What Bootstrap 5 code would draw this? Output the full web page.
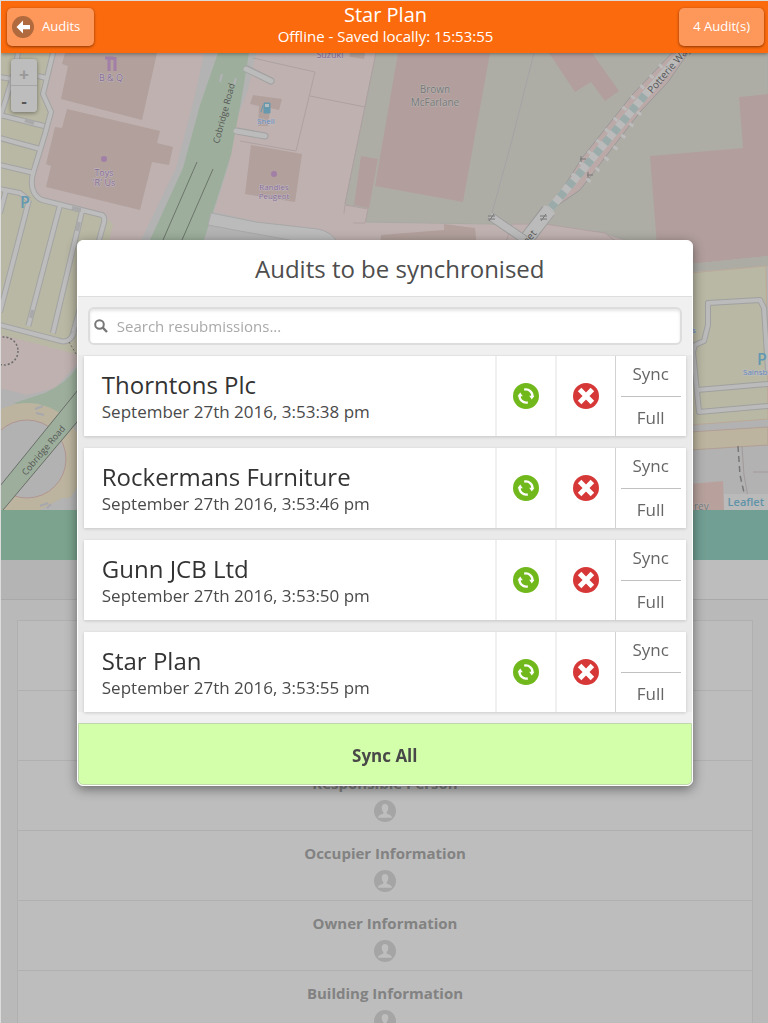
<!DOCTYPE html>
<html lang="en">
<head>
<meta charset="utf-8">
<meta name="viewport" content="width=device-width, initial-scale=1">
<title>Star Plan</title>
<link href="https://cdn.jsdelivr.net/npm/bootstrap@5.3.0/dist/css/bootstrap.min.css" rel="stylesheet">
<style>
body{font-family:"Open Sans","Noto Sans",sans-serif;background:#b9b9b9;border-top:1px solid #dcdcdc;border-left:1px solid #dcdcdc;color:#444}
.topbar{height:52px;background:#fb6b0e;color:#fff;box-shadow:0 1px 4px rgba(0,0,0,.4);padding:0 4px 0 6px;z-index:2}
.topbar h1{font-size:20px;line-height:22px;font-weight:500}
.topbar p{font-size:15px;line-height:20px;font-weight:500;padding-bottom:4px}
.topbtn{height:38px;background:#fd975a;color:#fff;font-size:13px;font-weight:500;border:0;border-radius:5px;box-shadow:0 1px 3px rgba(90,30,0,.7);padding:0 14px}
.topbtn:hover{background:#fda46e;color:#fff}
.topbtn-back{padding:0 14px 0 5px}
.topside{flex:1 1 0}
.mapview svg{display:block;width:100%;height:auto}
.zoomctl{position:absolute;left:10px;top:6px;width:26px;border-radius:4px;overflow:hidden;box-shadow:0 1px 4px rgba(0,0,0,.4)}
.zoomctl button{height:26px;border:0;background:#bdbdbd;color:#555;font:bold 17px/24px "Liberation Sans",sans-serif;padding:4px 0 0}
.zoomctl button+button{border-top:1px solid #a6a6a6;height:27px}
.zoomctl button:disabled{color:#999}
.attrib{position:absolute;right:0;bottom:0;font-size:11px;line-height:16px;padding:0 4px;background:#bababa}
.attrib a{color:#5f93a8;font-weight:600;text-decoration:none}
.tabs-a{height:50px;background:linear-gradient(90deg,#7ba38d 50%,#729f93 50%)}
.tabs-b{height:40px;background:linear-gradient(90deg,#b4b4b4 50%,#bdbdbd 50%);border-bottom:1px solid #a9a9a9}
.sections{margin:20px 15px 0 16px;background:#bdbdbd;border:1px solid #b0b0b0;border-bottom:0}
.sections li{height:70px;border-bottom:1px solid #b0b0b0;padding-top:12px;font-size:15px;line-height:20px;font-weight:700;color:#828282;text-align:center}
.sections svg{display:block;margin:7px auto 0}
.overlay{position:fixed;inset:0;z-index:5;padding:3px 9.8% 0 10%}
.dialog{width:100%;background:#f0f0f0;border:1px solid #fff;border-radius:6px;overflow:hidden;box-shadow:0 3px 12px rgba(0,0,0,.45)}
.dialog h2{background:#fff;border-bottom:1px solid #dedede;font-size:24px;line-height:55px;color:#4d4d4d;padding-left:30px}
.searchbox{margin:10px;height:38px;background:#fff;border:2px solid #ddd;border-radius:6px;box-shadow:inset 0 2px 3px rgba(0,0,0,.1);padding:0 4px}
.searchbox input{border:0;background:none;outline:0;font-size:15px;line-height:20px;color:#444;padding:0 0 0 9px}
.searchbox input::placeholder{color:#a9a9a9;opacity:1}
.queue{background:#eaeaea;padding:1px 6px 0;gap:12px}
.audit{height:80px;background:#fff;box-shadow:0 1px 3px rgba(0,0,0,.16)}
.audit h3{font-size:24px;line-height:28px;color:#333}
.audit p{font-size:17px;line-height:26px;color:#4a4a4a}
.audit .info{padding:15px 0 0 18px}
.iconcell{width:60px;border:0;border-left:2px solid #f0f0f0;background:none;padding:0}
.modes{width:71px;border-left:1px solid #d2d2d2;padding:0 5px}
.modes button{border:0;background:none;font-size:17px;line-height:24px;color:#666;padding:0 0 4px;flex:1 1 0}
.modes button+button{border-top:1px solid #c0c0c0;padding:3px 0 0}
.syncall{margin-top:11px;height:62px;background:#d3ffab;border:1px solid #c0d8ae;border-radius:0 0 5px 5px;font-size:17px;font-weight:700;color:#484848;padding-top:4px}
</style>
</head>
<body class="vh-100 overflow-hidden">
<svg width="0" height="0" class="position-absolute" aria-hidden="true">
<symbol id="ic-sync" viewBox="0 0 26 26"><circle cx="13" cy="13" r="13" fill="#70b81b"/><path d="M6.600 12A6.600 6.600 0 0 0 14.800 19.300M19.400 14A6.600 6.600 0 0 0 11.200 6.700" fill="none" stroke="#fff" stroke-width="2.300"/><path d="M4.600 13.200 7.200 9.600 9.800 13.200ZM21.400 12.800 18.800 16.400 16.200 12.800Z" fill="#fff"/></symbol>
<symbol id="ic-del" viewBox="0 0 26 26"><circle cx="13" cy="13" r="13" fill="#d63838"/><path d="M6.600 6.600 19.400 19.400M19.400 6.600 6.600 19.400" stroke="#fff" stroke-width="5"/></symbol>
<symbol id="ic-user" viewBox="0 0 22 22"><circle cx="11" cy="11" r="11" fill="#a5a5a5"/><path d="M11 4c-2.200 0-3.500 1.700-3.300 4 .1 1.900.8 3.200 1.600 4v1.700C7 14.600 4.500 14.800 4 17.800h14c-.5-3-3-3.200-5.300-4.100V12c.8-.8 1.500-2.100 1.600-4C14.500 5.700 13.200 4 11 4Z" fill="#bebebe"/></symbol>
</svg>
<header class="topbar position-relative d-flex align-items-center">
  <div class="topside"><button class="btn topbtn topbtn-back d-inline-flex align-items-center" type="button"><svg width="22" height="22" viewBox="0 0 22 22" class="me-2"><circle cx="11" cy="11" r="11" fill="#b06a3e"/><path d="M4.500 11 11 4.500V9h7v4.200h-7v4.300Z" fill="#fff"/></svg>Audits</button></div>
  <div class="text-center"><h1 class="m-0">Star Plan</h1><p class="m-0">Offline - Saved locally: 15:53:55</p></div>
  <div class="topside text-end"><button class="btn topbtn" type="button">4 Audit(s)</button></div>
</header>
<main>
<section class="mapview position-relative" aria-label="Map">
<svg viewBox="1 53 767 457" font-family="'Open Sans','Noto Sans',sans-serif">
<rect x="0" y="53" width="768" height="457" fill="#bfb1b0"/>
<!-- brownfield land -->
<path d="M376 53H768V260H690L600 232 490 224 366 222 368 208 345 204Z" fill="#aeada5" stroke="#a9a9a4"/>
<path d="M345 205 368 209 365 223 344 223 343 260H500L512 224 545 224 605 233 640 260H690V320H330Z" fill="#bfb1b0" stroke="#b0a2a1"/>
<!-- car parks, left -->
<path d="M0 53H50L42 96 50 112 44 135 33 170 31 188 40 200 104 216 113 224 95 300 88 360 0 332Z" fill="#b9b8a4"/>
<g fill="none" stroke="#a3a3a3" stroke-width="6"><path d="M53 53 43 94 51 112 45 134 34 170C29 185 33 196 42 200L102 215Q106 218 103 226L72 337Q68 344 58 340L0 325M18 53 15 70 0 118M0 77 12 79M38 76 46 78M0 115 44 126M0 138 40 149M0 165 34 173M0 189 20 193 29 200M6 190 0 213M29 200 0 312M60 205 27 331M82 211 52 337"/></g>
<g fill="none" stroke="#bdbdbd" stroke-width="4"><path d="M53 53 43 94 51 112 45 134 34 170C29 185 33 196 42 200L102 215Q106 218 103 226L72 337Q68 344 58 340L0 325M18 53 15 70 0 118M0 77 12 79M38 76 46 78M0 115 44 126M0 138 40 149M0 165 34 173M0 189 20 193 29 200M6 190 0 213M29 200 0 312M60 205 27 331M82 211 52 337"/></g>
<path d="M25 120 34 123M72 208 81 210M79 222 77 231M33 310 31 318M51 338 60 340" stroke="#a9a9a9" stroke-width="4"/>
<!-- retail buildings -->
<g fill="#b1a09b">
<path d="M65 53H157L142 120 61 99 68 66 62 64Z"/>
<path d="M67 109 160 131 157 143 173 147 169 165 152 162 140 210 46 187 51 166 46 164 55 127 62 128Z"/>
<path d="M345 53H365L364 59 345 56Z"/><path d="M381 235 444 230V224L466 227 475 228 478 260H379Z"/>
</g>
<g fill="#b29f9d"><path d="M398 53H490L463 202 375 186Z"/><path d="M361 156 378 159 369 208 354 205Z"/><path d="M549 53H592L619 91 605 101 591 82 575 92Z"/><path d="M768 94 739 97 743 148 650 156 658 260H768Z"/></g>
<!-- Cobridge Road -->
<path d="M204 53 195 95 176 168 141 240H250L225 150 262 53Z" fill="#b3b3b3"/>
<path d="M240 53H250L212 210 228 212 256 218 318 228 350 250H208L230 150Z" fill="#b3b3b3"/>
<path d="M249 53 242 96 231 155 204 240H150L183 168 200 105 218 53Z" fill="#9daf9c"/>
<path d="M197 162 163 240M213 169 182 240" stroke="#6b756b" fill="none"/>
<path d="M222 74 220 82M236 78 234 85" stroke="#b1b1b6" stroke-width="2"/>
<path d="M256 53 237 140 214 212 340 240H370L330 200 350 53Z" fill="#bfb1b0"/>
<g fill="none" stroke-linecap="round"><path d="M247 69 271 81M237 131 265 136" stroke="#a1a1a1" stroke-width="7"/><path d="M246 69 271 81M236 131 265 136" stroke="#bbb" stroke-width="5"/></g>
<path d="M211 213 256 222 318 229Q332 232 337 242H300L240 231 208 225Z" fill="#bbb" stroke="#a8a8a8"/>
<g fill="#b1a09b"><path d="M253 95 282 99 279 110 270 108 268 126 258 126 259 106 250 104Z"/><path d="M251 145 302 154 295 202 245 194Z"/></g>
<path d="M253 58 315 72 296 151 240 141M310 96 365 107M376 53 345 204" fill="none" stroke="#ada1a1"/>
<!-- Potterie Way -->
<path d="M672 53 632 95 582 158 548 212 580 190 640 112 668 82 688 53Z" fill="#bba9a8" stroke="#999"/>
<path d="M662 65 634 96 584 160 560 196" stroke="#bcbcbc" stroke-width="5" stroke-dasharray="3 11" fill="none"/>
<path d="M640 112 614 150 582 188" stroke="#bcbcbc" stroke-width="5" stroke-dasharray="3 11" fill="none"/>
<path d="M682 53 645 95 550 209" stroke="#bbb" stroke-width="8" fill="none"/>
<path d="M645 95 550 209" stroke="#9aabaa" stroke-width="8" stroke-dasharray="7 7" fill="none"/>
<path d="M548 211 520 248" stroke="#9b9b9b" stroke-width="15"/><path d="M550 209 518 250" stroke="#bbb" stroke-width="13"/>
<path d="M490 216 525 240" stroke="#9e9e9e" stroke-width="9"/><path d="M490 216 525 240" stroke="#bbb" stroke-width="7"/>
<path d="M488 216H495M488 219H495M489 221 494 214M540 216H547M540 219H547M541 221 546 214M580 159H586M581 156V162M587 175H593M588 172V178" stroke="#777" fill="none"/>
<path d="M534 53 512 140 492 213" stroke="#a5a3a5" fill="none"/>
<!-- roundabout, lower left -->
<path d="M0 325 77 345V372Q60 395 27 395L0 388Z" fill="#bfb1b0"/>
<path d="M0 335 10 337 80 355 80 341 0 318Z" fill="#b9b8a4"/>
<path d="M0 325 57 340Q70 345 74 332" fill="none" stroke="#a3a3a3" stroke-width="6"/><path d="M0 325 57 340Q70 345 74 332" fill="none" stroke="#bdbdbd" stroke-width="4"/>
<circle cx="4" cy="351" r="14" fill="none" stroke="#6d6d6d" stroke-dasharray="2 2" stroke-width="1.500"/>
<path d="M69 342 78 357" stroke="#6d6d6d" stroke-dasharray="2 2"/>
<path d="M0 388 27 395 55 388 90 350V520H0Z" fill="#b2b2b2"/>
<path d="M14 403 45 393Q68 382 78 366V405L52 420Z" fill="#9daf9c"/>
<circle cx="27" cy="460" r="57" fill="#bcb49e"/><path d="M40 510 62 498 90 497V520H38Z" fill="#b3b3b3"/>
<circle cx="27" cy="459" r="39" fill="#b2b2b2" stroke="#b19592"/>
<path d="M0 486 82 384V417L3 510H0Z" fill="#9daf9c"/><path d="M0 486 82 385M3 510 82 416" stroke="#6b6f6b"/>
<path d="M35 409 43 406M36 413 44 415M40 506 48 503M47 508 51 504" stroke="#a7a7ae" stroke-width="2"/>
<!-- supermarket, lower right -->
<path d="M690 255 768 250V510H690Z" fill="#b2b2b2"/>
<path d="M690 232H768V256L690 264Z" fill="#b29f9d"/><path d="M690 264 768 256V266L690 272Z" fill="#acaba4"/>
<path d="M690 273 766 266 768 419 690 425Z" fill="#b9b8a4" stroke="#bba998"/>
<path d="M690 432 768 427V445L690 450Z" fill="#bcb49e" stroke="#b19f96"/>
<g fill="none" stroke-linejoin="round"><path d="M768 370 764 308 760 300 708 303 708 325 704 341 695 345 693 352 699 412 768 406M697 390 768 384" stroke="#a0a0a0" stroke-width="6"/><path d="M768 370 764 308 760 300 708 303 708 325 704 341 695 345 693 352 699 412 768 406M697 390 768 384" stroke="#bbb" stroke-width="4"/></g>
<path d="M738 446 740 475 745 497" fill="none" stroke="#777" stroke-width="1.500" stroke-dasharray="6 4"/>
<path d="M742 446 744 475 748 497M753 472H768" fill="none" stroke="#a29a9a"/>
<path d="M690 484 723 481 724 510H690Z" fill="#b8a19d"/>
<!-- labels and markers -->
<g fill="#8a6a93" stroke="#c0bcc3" stroke-width="1" stroke-linejoin="round" paint-order="stroke" font-size="9" text-anchor="middle">
<text x="111" y="81">B &amp; Q</text><text x="104" y="176">Toys</text><text x="104" y="186">'R' Us</text><text x="330" y="58">Suzuki</text><text x="274" y="190" font-size="8">Randles</text><text x="274" y="199" font-size="8">Peugeot</text></g>
<circle cx="104" cy="159" r="3" fill="#a17fa7"/><circle cx="274" cy="174" r="3" fill="#a17fa7"/>
<path d="M105 58H112V60M109 58V71M115 57V71" stroke="#a17fa7" stroke-width="3" fill="none"/>
<path d="M264 103H270V113H264ZM263 105 261 112" fill="#6698ae" stroke="#6698ae"/><path d="M265 104H269V107H265Z" fill="#b5bcc0"/>
<g fill="#6584b3" stroke="#bfc1c8" stroke-width="1" stroke-linejoin="round" paint-order="stroke" font-size="8"><text x="257" y="124">Shell</text><text x="743" y="375">Sainsburys</text><text x="692" y="333">s</text></g>
<g fill="#6399b0" font-size="16" font-weight="600"><text x="20" y="208">P</text><text x="757" y="365">P</text></g>
<g fill="#777" stroke="#bab5b3" stroke-width="1" stroke-linejoin="round" paint-order="stroke" font-size="10"><text x="435" y="93" text-anchor="middle">Brown</text><text x="435" y="106" text-anchor="middle">McFarlane</text><text x="694" y="510">rey</text></g>
<g fill="#555" font-size="9"><text transform="translate(219 144) rotate(-75)">Cobridge Road</text><text transform="translate(26 476) rotate(-50)">Cobridge Road</text><text transform="translate(652 94) rotate(-49)" font-size="10">Potterie Way</text><text transform="translate(519 255) rotate(-50)" font-size="10">Street</text></g>
</svg>
<div class="zoomctl d-flex flex-column"><button type="button" disabled aria-label="Zoom in">+</button><button type="button" aria-label="Zoom out">-</button></div>
<div class="attrib"><a href="#">Leaflet</a></div>
</section>
<div class="tabs-a"></div>
<div class="tabs-b"></div>
<ul class="sections list-unstyled mb-0">
  <li></li>
  <li></li>
  <li>Responsible Person<svg width="22" height="22"><use href="#ic-user"/></svg></li>
  <li>Occupier Information<svg width="22" height="22"><use href="#ic-user"/></svg></li>
  <li>Owner Information<svg width="22" height="22"><use href="#ic-user"/></svg></li>
  <li>Building Information<svg width="22" height="22"><use href="#ic-user"/></svg></li>
</ul>
</main>
<div class="overlay d-flex align-items-center">
<div class="dialog d-flex flex-column" role="dialog" aria-labelledby="dlg-title">
  <h2 id="dlg-title" class="m-0 fw-normal text-center">Audits to be synchronised</h2>
  <label class="searchbox d-flex align-items-center"><svg width="14" height="14" viewBox="0 0 14 14"><circle cx="5.500" cy="5.500" r="4.300" fill="none" stroke="#777" stroke-width="2"/><path d="M8.700 8.700 13 13" stroke="#777" stroke-width="2.400"/></svg><input class="flex-grow-1" type="search" placeholder="Search resubmissions..." aria-label="Search resubmissions"></label>
  <div class="queue d-flex flex-column">
    <article class="audit d-flex"><div class="info flex-grow-1"><h3 class="m-0 fw-normal">Thorntons Plc</h3><p class="m-0">September 27th 2016, 3:53:38 pm</p></div><button class="iconcell" type="button" aria-label="Synchronise"><svg width="26" height="26"><use href="#ic-sync"/></svg></button><button class="iconcell" type="button" aria-label="Remove"><svg width="26" height="26"><use href="#ic-del"/></svg></button><div class="modes d-flex flex-column"><button type="button">Sync</button><button type="button">Full</button></div></article>
    <article class="audit d-flex"><div class="info flex-grow-1"><h3 class="m-0 fw-normal">Rockermans Furniture</h3><p class="m-0">September 27th 2016, 3:53:46 pm</p></div><button class="iconcell" type="button" aria-label="Synchronise"><svg width="26" height="26"><use href="#ic-sync"/></svg></button><button class="iconcell" type="button" aria-label="Remove"><svg width="26" height="26"><use href="#ic-del"/></svg></button><div class="modes d-flex flex-column"><button type="button">Sync</button><button type="button">Full</button></div></article>
    <article class="audit d-flex"><div class="info flex-grow-1"><h3 class="m-0 fw-normal">Gunn JCB Ltd</h3><p class="m-0">September 27th 2016, 3:53:50 pm</p></div><button class="iconcell" type="button" aria-label="Synchronise"><svg width="26" height="26"><use href="#ic-sync"/></svg></button><button class="iconcell" type="button" aria-label="Remove"><svg width="26" height="26"><use href="#ic-del"/></svg></button><div class="modes d-flex flex-column"><button type="button">Sync</button><button type="button">Full</button></div></article>
    <article class="audit d-flex"><div class="info flex-grow-1"><h3 class="m-0 fw-normal">Star Plan</h3><p class="m-0">September 27th 2016, 3:53:55 pm</p></div><button class="iconcell" type="button" aria-label="Synchronise"><svg width="26" height="26"><use href="#ic-sync"/></svg></button><button class="iconcell" type="button" aria-label="Remove"><svg width="26" height="26"><use href="#ic-del"/></svg></button><div class="modes d-flex flex-column"><button type="button">Sync</button><button type="button">Full</button></div></article>
  </div>
  <button class="syncall" type="button">Sync All</button>
</div>
</div>
<script src="https://cdn.jsdelivr.net/npm/bootstrap@5.3.0/dist/js/bootstrap.bundle.min.js"></script>
</body>
</html>
